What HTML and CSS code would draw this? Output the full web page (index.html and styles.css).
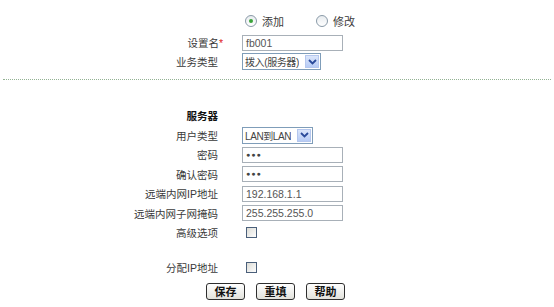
FILE: index.html
```html
<!DOCTYPE html>
<html lang="zh-CN">
<head>
    <meta charset="UTF-8">
    <title>拨入设置</title>
    <link rel="stylesheet" href="styles.css">
</head>
<body>
    <div class="top">
        <div class="mode">
            <label class="radio-item"><span class="radio checked"></span>添加</label>
            <label class="radio-item"><span class="radio"></span>修改</label>
        </div>
        <div class="row">
            <span class="label">设置名<span class="star">*</span></span>
            <span class="field"><span class="input">fb001</span></span>
        </div>
        <div class="row">
            <span class="label">业务类型</span>
            <span class="field"><span class="select wide"><span class="value">拨入(服务器)</span><span class="arrow"><svg width="9" height="6" viewBox="0 0 9 6"><path d="M1 1 L4.5 4.5 L8 1" fill="none" stroke="#2a4a9a" stroke-width="1.8"/></svg></span></span></span>
        </div>
    </div>

    <div class="divider"></div>

    <div class="server">
        <div class="row">
            <span class="label heading">服务器</span>
            <span class="field"></span>
        </div>
        <div class="row">
            <span class="label">用户类型</span>
            <span class="field"><span class="select"><span class="value">LAN到LAN</span><span class="arrow"><svg width="9" height="6" viewBox="0 0 9 6"><path d="M1 1 L4.5 4.5 L8 1" fill="none" stroke="#2a4a9a" stroke-width="1.8"/></svg></span></span></span>
        </div>
        <div class="row">
            <span class="label">密码</span>
            <span class="field"><span class="input dots">●●●</span></span>
        </div>
        <div class="row">
            <span class="label">确认密码</span>
            <span class="field"><span class="input dots">●●●</span></span>
        </div>
        <div class="row">
            <span class="label">远端内网IP地址</span>
            <span class="field"><span class="input">192.168.1.1</span></span>
        </div>
        <div class="row">
            <span class="label">远端内网子网掩码</span>
            <span class="field"><span class="input">255.255.255.0</span></span>
        </div>
        <div class="row">
            <span class="label">高级选项</span>
            <span class="field"><span class="checkbox"></span></span>
        </div>
        <div class="row blank"></div>
        <div class="row">
            <span class="label">分配IP地址</span>
            <span class="field"><span class="checkbox"></span></span>
        </div>
        <div class="buttons">
            <button class="btn">保存</button>
            <button class="btn">重填</button>
            <button class="btn">帮助</button>
        </div>
    </div>
</body>
</html>
```

FILE: styles.css
```css
body {
    margin: 0;
    background-color: #fff;
    font-family: "Liberation Sans", "Noto Sans CJK SC", sans-serif;
    font-size: 10.5px;
    color: #3a3a3a;
}
.top {
    padding-top: 11px;
}
.mode {
    display: flex;
    align-items: center;
    height: 20px;
    padding-left: 245px;
    gap: 32px;
    margin-bottom: 2px;
}
.radio-item {
    display: flex;
    align-items: center;
    gap: 5px;
    font-size: 11px;
}
.radio {
    width: 10px;
    height: 10px;
    border: 1px solid #8a9aa8;
    border-radius: 50%;
    background: linear-gradient(#e8ecef, #fff);
    display: flex;
    align-items: center;
    justify-content: center;
}
.radio.checked::after {
    content: "";
    width: 4px;
    height: 4px;
    border-radius: 50%;
    background-color: #3aa33a;
}
.row {
    display: grid;
    grid-template-columns: 218px 1fr;
    column-gap: 24px;
    align-items: center;
    height: 19.5px;
}
.top .row {
    height: 19px;
}
.row.blank {
    height: 15px;
}
.label {
    text-align: right;
    white-space: nowrap;
}
.heading {
    font-weight: bold;
    color: #111;
}
.star {
    color: #e02020;
    margin-right: -5px;
}
.field {
    display: flex;
    align-items: center;
}
.input {
    box-sizing: border-box;
    width: 101px;
    height: 16px;
    border: 1px solid #a8b0b8;
    padding: 0 3px;
    line-height: 14px;
    color: #555;
    background-color: #fff;
    white-space: nowrap;
}
.input.dots {
    font-size: 7px;
    letter-spacing: 1px;
    color: #444;
}
.select {
    box-sizing: border-box;
    width: 71px;
    height: 17px;
    border: 1px solid #7f9db9;
    padding: 0 0 0 2px;
    display: flex;
    align-items: center;
    justify-content: space-between;
    color: #444;
    white-space: nowrap;
    overflow: hidden;
}
.select.wide {
    width: 79px;
}
.value {
    font-size: 10px;
    letter-spacing: -0.4px;
    overflow: hidden;
}
.arrow {
    flex: none;
    width: 14px;
    height: 13px;
    margin-right: 1px;
    background: linear-gradient(#dbe6fb, #b7cbf5);
    border: 1px solid #b5c7ee;
    box-sizing: border-box;
    display: flex;
    align-items: center;
    justify-content: center;
}
.checkbox {
    width: 11px;
    height: 11px;
    box-sizing: border-box;
    margin-left: 4px;
    border: 1px solid #4a5f7a;
    background: linear-gradient(135deg, #dcdcd6, #fdfdfd);
}
.divider {
    margin: 8px 3px 0;
    border-top: 1px dotted #93b293;
    height: 26px;
}
.buttons {
    display: flex;
    gap: 11px;
    padding-left: 206px;
    margin-top: 6px;
}
.btn {
    width: 39px;
    height: 17px;
    padding: 0;
    border: 1px solid #2e2e2e;
    border-radius: 3px;
    background: linear-gradient(#ffffff, #e2e2dc);
    font-family: "Noto Sans CJK SC", sans-serif;
    font-size: 11px;
    font-weight: bold;
    color: #111;
    line-height: 15px;
}
```
